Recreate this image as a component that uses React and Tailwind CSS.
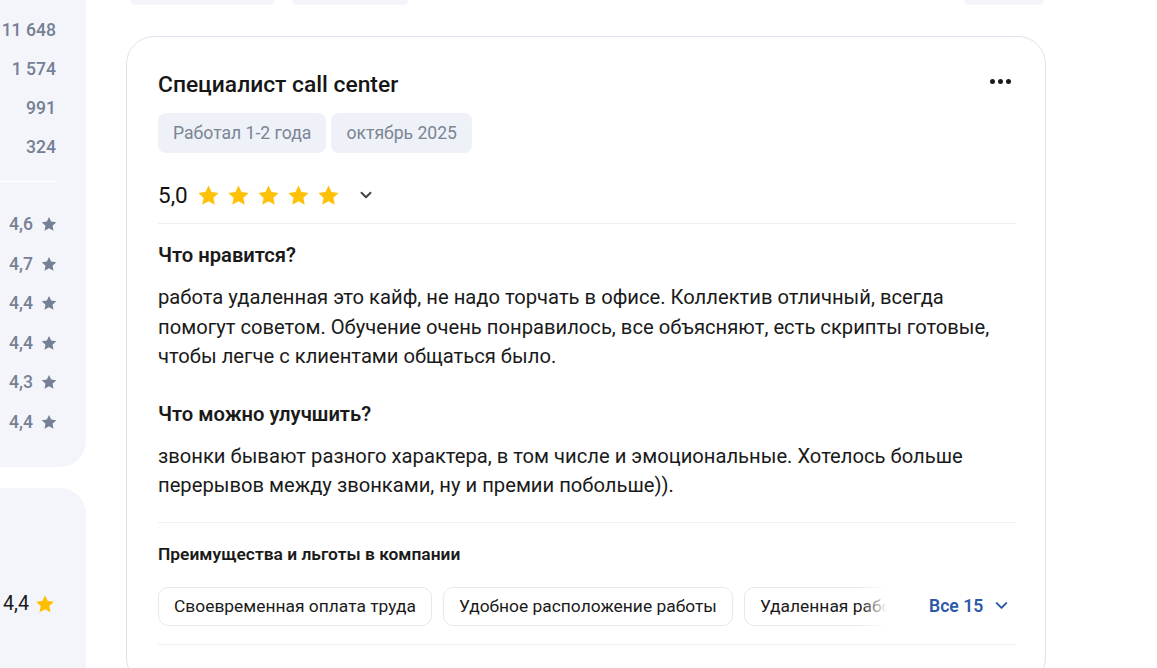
import React from "react";

const sideCounts = ["11 648", "1 574", "991", "324"];
const sideRatings = ["4,6", "4,7", "4,4", "4,4", "4,3", "4,4"];
const perks = ["Своевременная оплата труда", "Удобное расположение работы", "Удаленная работа"];

function Star({ className }) {
  return (
    <svg viewBox="0 0 24 24" className={className} fill="currentColor">
      <path d="M12 2.5l2.9 6.2 6.8.8-5 4.7 1.3 6.7L12 17.6 6 20.9l1.3-6.7-5-4.7 6.8-.8z" />
    </svg>
  );
}

function Chevron({ className }) {
  return (
    <svg viewBox="0 0 24 24" className={className} fill="none" stroke="currentColor" strokeWidth="2.6" strokeLinecap="round" strokeLinejoin="round">
      <path d="M6 9l6 6 6-6" />
    </svg>
  );
}

export default function App() {
  return (
    <div className="flex min-h-screen bg-white overflow-hidden" style={{ fontFamily: "Roboto, 'Noto Sans', sans-serif" }}>
      {/* left column */}
      <div className="w-[86px] shrink-0 flex flex-col">
        <div className="bg-[#f4f5fa] rounded-br-[26px] pt-[17px] pb-[18px]">
          <div className="w-[56px] flex flex-col">
            {sideCounts.map((c) => (
              <div key={c} className="h-[39px] flex items-start justify-end text-[17.6px] font-medium text-[#768094] leading-[26px]">
                {c}
              </div>
            ))}
          </div>
          <div className="w-[56px] h-px bg-white mt-[8px] mb-[30px]" />
          <div className="w-[58px] flex flex-col">
            {sideRatings.map((r, i) => (
              <div key={i} className="h-[39.5px] flex items-start justify-end gap-[7px] text-[17.6px] font-medium text-[#768094] leading-[24px]">
                <span>{r}</span>
                <Star className="w-[18px] h-[18px] mt-[3px] text-[#768094]" />
              </div>
            ))}
          </div>
        </div>
        <div className="mt-[21px] flex-1 bg-[#f4f5fa] rounded-tr-[26px] pt-[103px]">
          <div className="flex items-center gap-[5px] pl-[3px] text-[19.8px] text-[#1a1a1a] leading-[26px]">
            <span>4,4</span>
            <Star className="w-[22px] h-[22px] text-[#ffbf00]" />
          </div>
        </div>
      </div>

      {/* main column */}
      <div className="ml-[40px] w-[920px] shrink-0 flex flex-col">
        <div className="flex h-[5px]">
          <div className="ml-[4px] w-[145px] h-[5px] bg-[#f4f5fa] rounded-b-[16px]" />
          <div className="ml-[17px] w-[116px] h-[5px] bg-[#f4f5fa] rounded-b-[16px]" />
          <div className="ml-auto mr-[2px] w-[80px] h-[5px] bg-[#f4f5fa] rounded-b-[16px]" />
        </div>

        <div className="mt-[31px] border border-[#dde2ec] rounded-[28px] pl-[31px] pr-[29px] pt-[33px] pb-[40px]">
          <div className="flex items-center justify-between">
            <h2 className="text-[22.8px] font-medium text-[#161616] leading-[30px]">Специалист call center</h2>
            <div className="flex gap-[3px] mr-[5px] -mt-[8px]">
              <span className="w-[5px] h-[5px] rounded-full bg-[#1a1a1a]" />
              <span className="w-[5px] h-[5px] rounded-full bg-[#1a1a1a]" />
              <span className="w-[5px] h-[5px] rounded-full bg-[#1a1a1a]" />
            </div>
          </div>

          <div className="flex gap-[5px] mt-[13px]">
            <span className="h-[40px] px-[15px] flex items-center rounded-[8px] bg-[#eef1f7] text-[17.6px] text-[#7b8594]">Работал 1-2 года</span>
            <span className="h-[40px] px-[15px] flex items-center rounded-[8px] bg-[#eef1f7] text-[17.6px] text-[#7b8594]">октябрь 2025</span>
          </div>

          <div className="flex items-center mt-[27px] h-[30px]">
            <span className="text-[22.5px] text-[#111] leading-[30px] mr-[8px]">5,0</span>
            <div className="flex gap-[5px]">
              {[0, 1, 2, 3, 4].map((i) => (
                <Star key={i} className="w-[25px] h-[25px] text-[#ffc107]" />
              ))}
            </div>
            <Chevron className="w-[18px] h-[18px] ml-[16px] text-[#444]" />
          </div>

          <div className="h-px bg-[#eef0f4] mt-[13px]" />

          <h3 className="mt-[18px] text-[20.2px] font-semibold text-[#1a1a1a] leading-[26px]">Что нравится?</h3>
          <p className="mt-[15px] text-[20.2px] text-[#1a1a1a] leading-[29.5px]">
            работа удаленная это кайф, не надо торчать в офисе. Коллектив отличный, всегда помогут советом. Обучение очень понравилось, все объясняют, есть скрипты готовые, чтобы легче с клиентами общаться было.
          </p>

          <h3 className="mt-[29px] text-[20.2px] font-semibold text-[#1a1a1a] leading-[26px]">Что можно улучшить?</h3>
          <p className="mt-[15px] text-[20.2px] text-[#1a1a1a] leading-[29.5px]">
            звонки бывают разного характера, в том числе и эмоциональные. Хотелось больше перерывов между звонками, ну и премии побольше)).
          </p>

          <div className="h-px bg-[#eef0f4] mt-[21px]" />

          <h4 className="mt-[20px] text-[17.4px] font-semibold text-[#1a1a1a] leading-[22px]">Преимущества и льготы в компании</h4>

          <div className="flex items-center mt-[22px]">
            <div className="relative flex gap-[11px] w-[729px] overflow-hidden">
              {perks.map((p) => (
                <span key={p} className="shrink-0 h-[39px] px-[15px] flex items-center rounded-[10px] border border-[#e6e9f1] text-[17.4px] text-[#1a1a1a] whitespace-nowrap">
                  {p}
                </span>
              ))}
              <div className="absolute right-0 top-0 h-full w-[26px] bg-gradient-to-r from-white/0 to-white" />
            </div>
            <button className="ml-[42px] flex items-center gap-[9px] text-[17.6px] font-semibold text-[#2c5aa8]">
              Все 15
              <Chevron className="w-[19px] h-[19px] text-[#2c5aa8]" />
            </button>
          </div>

          <div className="h-px bg-[#eef0f4] mt-[18px]" />
        </div>
      </div>
    </div>
  );
}
